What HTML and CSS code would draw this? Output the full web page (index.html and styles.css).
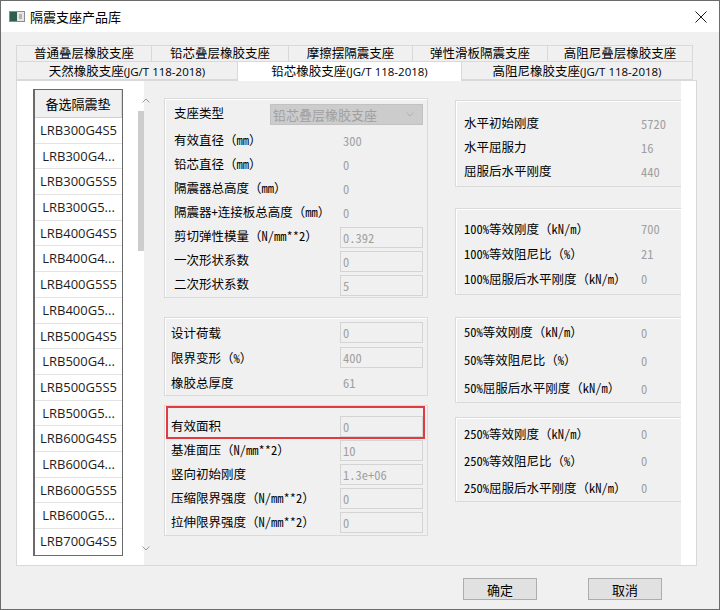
FILE: index.html
```html
<!DOCTYPE html>
<html lang="zh-CN">

<head>
    <meta charset="UTF-8">
    <meta name="viewport" content="width=device-width, initial-scale=1.0">
    <title>隔震支座产品库</title>
    <link rel="stylesheet" href="styles.css">
</head>

<body>
    <div class="window">
        <div class="titlebar">
            <svg class="app-icon" width="16" height="11" viewBox="0 0 16 11">
                <rect x="0.5" y="0.5" width="15" height="10" fill="#e6e6e6" stroke="#8c8c8c" />
                <rect x="1" y="1" width="7" height="9" fill="#2f5e50" />
                <rect x="10" y="3" width="3" height="5" fill="#b4b4b4" />
            </svg>
            <span class="title">隔震支座产品库</span>
            <svg class="close-btn" width="12" height="12" viewBox="0 0 12 12">
                <path d="M0.5 0.5L11.5 11.5M11.5 0.5L0.5 11.5" stroke="#1a1a1a" stroke-width="1" />
            </svg>
        </div>

        <div class="client">
            <div class="tab-row tab-row-back">
                <div class="tab">普通叠层橡胶支座</div>
                <div class="tab">铅芯叠层橡胶支座</div>
                <div class="tab">摩擦摆隔震支座</div>
                <div class="tab">弹性滑板隔震支座</div>
                <div class="tab">高阻尼叠层橡胶支座</div>
            </div>
            <div class="tab-row tab-row-front">
                <div class="tab">天然橡胶支座<span class="latin">(JG/T 118-2018)</span></div>
                <div class="tab active">铅芯橡胶支座<span class="latin">(JG/T 118-2018)</span></div>
                <div class="tab">高阻尼橡胶支座<span class="latin">(JG/T 118-2018)</span></div>
            </div>

            <div class="tab-page">
                <div class="list-col">
                    <div class="list-table">
                        <div class="list-head">备选隔震垫</div>
                        <div class="list-item">LRB300G4S5</div>
                        <div class="list-item">LRB300G4...</div>
                        <div class="list-item">LRB300G5S5</div>
                        <div class="list-item">LRB300G5...</div>
                        <div class="list-item">LRB400G4S5</div>
                        <div class="list-item">LRB400G4...</div>
                        <div class="list-item">LRB400G5S5</div>
                        <div class="list-item">LRB400G5...</div>
                        <div class="list-item">LRB500G4S5</div>
                        <div class="list-item">LRB500G4...</div>
                        <div class="list-item">LRB500G5S5</div>
                        <div class="list-item">LRB500G5...</div>
                        <div class="list-item">LRB600G4S5</div>
                        <div class="list-item">LRB600G4...</div>
                        <div class="list-item">LRB600G5S5</div>
                        <div class="list-item">LRB600G5...</div>
                        <div class="list-item">LRB700G4S5</div>
                    </div>
                </div>

                <div class="scroll-col">
                    <svg class="arrow" width="8" height="5" viewBox="0 0 8 5">
                        <path d="M0.5 4.5L4 1L7.5 4.5" fill="none" stroke="#9a9a9a" />
                    </svg>
                    <div class="thumb"></div>
                    <div class="spacer"></div>
                    <svg class="arrow" width="8" height="5" viewBox="0 0 8 5">
                        <path d="M0.5 0.5L4 4L7.5 0.5" fill="none" stroke="#9a9a9a" />
                    </svg>
                </div>

                <div class="content">
                    <div class="mid-col">
                        <div class="panel panel-basic">
                            <div class="row row-combo">
                                <span class="label label-combo">支座类型</span>
                                <div class="combo">
                                    <span>铅芯叠层橡胶支座</span>
                                    <svg width="8" height="5" viewBox="0 0 8 5">
                                        <path d="M0.5 0.5L4 4L7.5 0.5" fill="none" stroke="#b0b0b0" />
                                    </svg>
                                </div>
                            </div>
                            <div class="row"><span class="label">有效直径（mm）</span><span class="value">300</span></div>
                            <div class="row"><span class="label">铅芯直径（mm）</span><span class="value">0</span></div>
                            <div class="row"><span class="label">隔震器总高度（mm）</span><span class="value">0</span></div>
                            <div class="row"><span class="label">隔震器+连接板总高度（mm）</span><span class="value">0</span></div>
                            <div class="row"><span class="label">剪切弹性模量（N/mm**2）</span><span class="field">0.392</span></div>
                            <div class="row"><span class="label">一次形状系数</span><span class="field">0</span></div>
                            <div class="row"><span class="label">二次形状系数</span><span class="field">5</span></div>
                        </div>

                        <div class="panel panel-load">
                            <div class="row"><span class="label">设计荷载</span><span class="field">0</span></div>
                            <div class="row"><span class="label">限界变形（%）</span><span class="field">400</span></div>
                            <div class="row"><span class="label">橡胶总厚度</span><span class="value">61</span></div>
                        </div>

                        <div class="panel panel-press">
                            <div class="row"><span class="label">有效面积</span><span class="field">0</span></div>
                            <div class="row"><span class="label">基准面压（N/mm**2）</span><span class="field">10</span></div>
                            <div class="row"><span class="label">竖向初始刚度</span><span class="field">1.3e+06</span></div>
                            <div class="row"><span class="label">压缩限界强度（N/mm**2）</span><span class="field">0</span></div>
                            <div class="row"><span class="label">拉伸限界强度（N/mm**2）</span><span class="field">0</span></div>
                            <div class="highlight"></div>
                        </div>
                    </div>

                    <div class="right-col">
                        <div class="panel panel-right panel-a">
                            <div class="row"><span class="label">水平初始刚度</span><span class="value">5720</span></div>
                            <div class="row"><span class="label">水平屈服力</span><span class="value">16</span></div>
                            <div class="row"><span class="label">屈服后水平刚度</span><span class="value">440</span></div>
                        </div>
                        <div class="panel panel-right panel-b">
                            <div class="row"><span class="label">100%等效刚度（kN/m）</span><span class="value">700</span></div>
                            <div class="row"><span class="label">100%等效阻尼比（%）</span><span class="value">21</span></div>
                            <div class="row"><span class="label">100%屈服后水平刚度（kN/m）</span><span class="value">0</span></div>
                        </div>
                        <div class="panel panel-right panel-c">
                            <div class="row"><span class="label">50%等效刚度（kN/m）</span><span class="value">0</span></div>
                            <div class="row"><span class="label">50%等效阻尼比（%）</span><span class="value">0</span></div>
                            <div class="row"><span class="label">50%屈服后水平刚度（kN/m）</span><span class="value">0</span></div>
                        </div>
                        <div class="panel panel-right panel-d">
                            <div class="row"><span class="label">250%等效刚度（kN/m）</span><span class="value">0</span></div>
                            <div class="row"><span class="label">250%等效阻尼比（%）</span><span class="value">0</span></div>
                            <div class="row"><span class="label">250%屈服后水平刚度（kN/m）</span><span class="value">0</span></div>
                        </div>
                    </div>
                </div>

                <div class="right-strip"></div>
            </div>

            <div class="buttons">
                <button class="btn">确定</button>
                <button class="btn">取消</button>
            </div>
        </div>
    </div>
</body>

</html>
```

FILE: styles.css
```css
:root {
    --bg: #f0f0f0;
    --line: #d9d9d9;
    --text: #000000;
    --muted: #a0a0a0;
    --cjk: "Noto Sans CJK SC", sans-serif;
    --mono: "Noto Sans Mono CJK SC", "Noto Sans CJK SC", monospace;
}

* {
    margin: 0;
    padding: 0;
    box-sizing: border-box;
}

body {
    width: 720px;
    height: 610px;
    background: var(--bg);
    font-family: var(--cjk);
    color: var(--text);
    overflow: hidden;
}

.window {
    width: 720px;
    height: 610px;
    border: 1px solid #6b6b6b;
    display: flex;
    flex-direction: column;
}

/* title bar */
.titlebar {
    height: 31px;
    background: #ffffff;
    display: flex;
    align-items: center;
    padding-left: 8px;
}

.app-icon {
    margin-right: 5px;
}

.title {
    font-size: 13px;
    line-height: 16px;
}

.close-btn {
    margin-left: auto;
    margin-right: 12px;
}

/* tabs */
.client {
    flex: 1;
    padding: 13px 0 0 15px;
}

.tab-row {
    display: flex;
    width: 677px;
}

.tab {
    height: 17px;
    border: 1px solid var(--line);
    border-left: none;
    background: var(--bg);
    font-size: 12.5px;
    line-height: 13px;
    text-align: center;
    white-space: nowrap;
}

.tab:first-child {
    border-left: 1px solid var(--line);
}

.tab-row-front .tab {
    height: 18px;
    border-top: none;
    line-height: 18px;
}

.tab-row-back .tab:nth-child(1) { width: 136px; }
.tab-row-back .tab:nth-child(2) { width: 137px; }
.tab-row-back .tab:nth-child(3) { width: 124px; }
.tab-row-back .tab:nth-child(4) { width: 135px; }
.tab-row-back .tab:nth-child(5) { width: 145px; }

.tab-row-front .tab:nth-child(1) { width: 222px; }
.tab-row-front .tab:nth-child(2) { width: 224px; }
.tab-row-front .tab:nth-child(3) { width: 231px; }

.tab.active {
    background: #ffffff;
    height: 19px;
    margin-bottom: -1px;
    border-bottom: none;
    position: relative;
    z-index: 1;
}

.latin {
    font-family: "Open Sans", sans-serif;
    font-size: 11.5px;
}

/* tab page */
.tab-page {
    width: 681px;
    height: 486px;
    border: 1px solid var(--line);
    background: #ffffff;
    display: flex;
}

.list-col {
    width: 120px;
    background: #ffffff;
    padding: 8px 0 0 16px;
}

.list-table {
    width: 90px;
    border: 1px solid #6a6a6a;
    border-left-width: 2px;
    background: #ffffff;
}

.list-head {
    height: 28px;
    line-height: 27px;
    text-align: center;
    font-size: 13px;
    background: #f0f0f0;
    border-bottom: 1px solid #d0d0d0;
    border-right: 1px solid #d8d8d8;
}

.list-item {
    height: 25.7px;
    line-height: 25px;
    text-align: center;
    font-family: "Open Sans", sans-serif;
    font-size: 13px;
    color: #1e1e1e;
    border-bottom: 1px solid #e3e3e3;
}

.list-item:last-child {
    border-bottom: none;
}

.scroll-col {
    width: 16px;
    background: linear-gradient(90deg, #ffffff 7px, #f0f0f0 7px);
    display: flex;
    flex-direction: column;
    align-items: flex-start;
    padding: 17px 0 14px 0;
}

.scroll-col .arrow {
    margin-left: 5px;
}

.thumb {
    width: 6px;
    height: 140px;
    margin: 8px 0 0 1px;
    background: #cdcdcd;
}

.spacer {
    flex: 1;
}

.content {
    width: 528px;
    background: var(--bg);
    overflow: hidden;
    display: flex;
    align-items: flex-start;
}

.right-strip {
    width: 15px;
    background: #ffffff;
}

/* group boxes */
.mid-col {
    width: 264px;
    margin: 17px 0 0 11px;
    flex-shrink: 0;
}

.right-col {
    width: 260px;
    margin: 19px 0 0 27px;
    flex-shrink: 0;
}

.panel {
    border: 1px solid #dadada;
    box-shadow: inset 1px 1px 0 #ffffff;
    background: var(--bg);
    position: relative;
}

.row {
    display: flex;
    align-items: center;
    height: 24px;
    font-size: 12.5px;
    white-space: nowrap;
}

.label {
    font-family: var(--mono);
    line-height: 18px;
    flex-shrink: 0;
}

.value {
    font-family: var(--mono);
    color: var(--muted);
    padding-left: 3px;
}

.field {
    width: 83px;
    height: 21px;
    border: 1px solid #d4d4d4;
    background: #f0f0f0;
    font-family: var(--mono);
    color: var(--muted);
    line-height: 19px;
    padding-left: 2px;
}

.panel-basic {
    padding: 2px 0 1px 9px;
}

.panel-basic .label {
    width: 166px;
}

.panel-basic .row-combo {
    height: 27px;
}

.panel-basic .label-combo {
    width: 96px;
    align-self: flex-start;
    margin-top: 3px;
}

.panel-basic .field {
    align-self: flex-end;
}

.combo {
    width: 153px;
    height: 21px;
    background: #cccccc;
    border: 1px solid #c2c2c2;
    color: var(--muted);
    display: flex;
    align-items: center;
    justify-content: space-between;
    padding: 0 8px 0 2px;
    font-size: 13px;
}

.panel-load {
    margin-top: 19px;
    padding: 2px 0 0 6px;
}

.panel-load .row {
    height: 25px;
}

.panel-load .label,
.panel-press .label {
    width: 169px;
}

.panel-press {
    margin-top: 9px;
    padding: 8px 0 1px 6px;
}

.highlight {
    position: absolute;
    top: 0;
    left: 1px;
    width: 259px;
    height: 33px;
    border: 2px solid #e23a3f;
}

.panel-right {
    padding-left: 8px;
}

.panel-right .label {
    width: 177px;
}

.panel-right .value {
    padding-left: 0;
}

.panel-a {
    padding-top: 10px;
    padding-bottom: 3px;
}

.panel-b {
    margin-top: 21px;
    padding-top: 7px;
    padding-bottom: 3px;
}

.panel-b .row {
    height: 25px;
}

.panel-c {
    margin-top: 22px;
}

.panel-c .row {
    height: 28px;
}

.panel-d {
    margin-top: 14px;
    padding-top: 2px;
}

.panel-d .row {
    height: 27px;
}

/* dialog buttons */
.buttons {
    width: 681px;
    display: flex;
    justify-content: flex-end;
    gap: 51px;
    padding-right: 35px;
    margin-top: 12px;
}

.btn {
    width: 74px;
    height: 22px;
    background: #e1e1e1;
    border: 1px solid #adadad;
    font-family: var(--cjk);
    font-size: 13px;
    color: var(--text);
}
```
